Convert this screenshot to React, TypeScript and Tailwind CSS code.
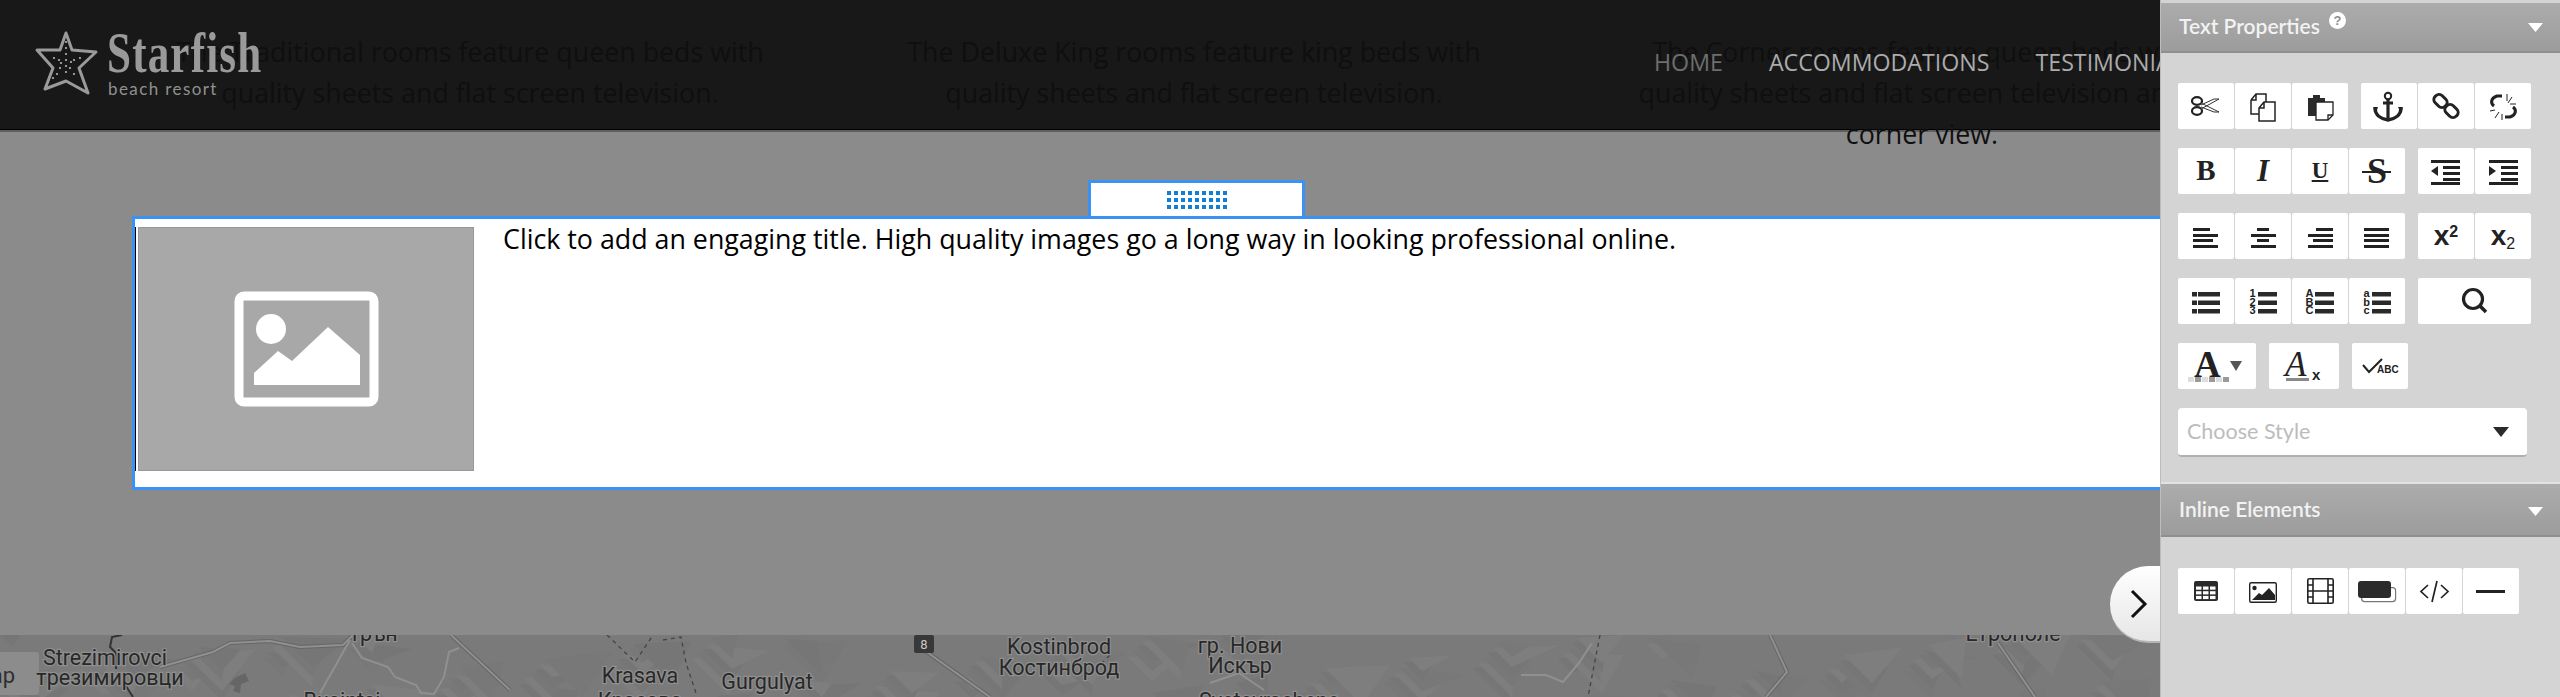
import React from "react";

const Btn = ({ w = "w-[56px]", children }: { w?: string; children?: React.ReactNode }) => (
  <div className={`relative flex h-[46px] ${w} shrink-0 items-center justify-center rounded-[2px] bg-white text-[#222]`}>{children}</div>
);

const Ic = ({ w = 56, children }: { w?: number; children: React.ReactNode }) => (
  <svg width={w} height={46} viewBox={`0 0 ${w} 46`} className="block" fill="none">
    {children}
  </svg>
);

const Bars = ({ rows, x = 0 }: { rows: [number, number, number][]; x?: number }) => (
  <>
    {rows.map(([rx, ry, rw], i) => (
      <rect key={i} x={rx + x} y={ry} width={rw} height={3} fill="#222" />
    ))}
  </>
);

const Group = ({ children }: { children: React.ReactNode }) => <div className="flex gap-px">{children}</div>;

const Row = ({ children }: { children: React.ReactNode }) => <div className="flex h-[46px] gap-[13px]">{children}</div>;

const ListIcon = ({ labels }: { labels: string[] }) => (
  <Btn>
    <Ic>
      {[0, 1, 2].map((i) => (
        <g key={i}>
          <rect x={23} y={14 + i * 8.5} width={19} height={4.5} fill="#2a2a2a" />
          <text x={17.5} y={19 + i * 8.5} textAnchor="middle" fontSize={11} fontWeight={700} fontFamily="'Liberation Sans',sans-serif" fill="#222">
            {labels[i]}
          </text>
        </g>
      ))}
    </Ic>
  </Btn>
);

const SectionHead = ({ title, help, tall }: { title: string; help?: boolean; tall?: boolean }) => (
  <div className={`relative flex ${tall ? "h-[53px]" : "h-[50px]"} items-center border-b-2 border-[#8f8f8f] bg-gradient-to-b from-[#acacac] to-[#9c9c9c] pl-[18px] pb-[2px]`}>
    <span className="font-['Lato',sans-serif] text-[21px] font-semibold text-[#f2f2f2]">{title}</span>
    {help && (
      <span className="absolute left-[168px] top-[9px] flex h-[17px] w-[17px] items-center justify-center rounded-full bg-white font-['Liberation_Sans',sans-serif] text-[13px] font-bold leading-none text-[#8f8f8f]">
        ?
      </span>
    )}
    <svg width={15} height={9} viewBox="0 0 15 9" className={`absolute right-[17px] ${tall ? "top-[23px]" : "top-[20px]"}`}>
      <path d="M0 0H15L7.5 9Z" fill="#fff" />
    </svg>
  </div>
);

const patches = Array.from({ length: 150 }, (_, i) => {
  const x = (i * 173) % 2160;
  const y = (i * 37) % 62;
  const a = 25 + ((i * 13) % 45);
  const b = 12 + ((i * 7) % 30);
  return {
    points: `${x},${y} ${x + a},${y + ((i * 5) % 20) - 8} ${x + b},${y + b}`,
    fill: i % 3 === 0 ? "#767676" : i % 3 === 1 ? "#7e7e7e" : "#787878",
  };
});

const labels: [string, number, number][] = [
  ["Strezimirovci", 105, 30],
  ["трезимировци", 110, 50],
  ["Трън", 373, 6],
  ["Busintsi", 342, 73],
  ["Krasava", 640, 48],
  ["Красава", 640, 73],
  ["Gurgulyat", 767, 54],
  ["Kostinbrod", 1059, 19],
  ["Костинброд", 1059, 40],
  ["гр. Нови", 1240, 18],
  ["Искър", 1240, 38],
  ["Svetovrachene", 1269, 73],
  ["Етрополе", 2013, 6],
];

const MapStrip = () => (
  <div className="h-[62px] shrink-0 overflow-hidden bg-[#7a7a7a]">
    <svg width={2160} height={62} viewBox="0 0 2160 62" className="block" fill="none">
      {patches.map((p, i) => (
        <polygon key={i} points={p.points} fill={p.fill} />
      ))}
      <path d="M235 43l10-5 4 8-8 3-1 9-7-2 2-5-6-2z" fill="#666" />
      <g stroke="#666" strokeWidth={4}>
        <path d="M160 32L213 17L230 8L270 6L300 12L343 10L353 0" />
        <path d="M451 0L510 55" />
        <path d="M924 15L990 62" />
        <path d="M1770 0L1787 37L1766 62" />
        <path d="M1998 8L2035 62" />
      </g>
      <g stroke="#909090" strokeWidth={2}>
        <path d="M160 32L213 17L230 8L270 6L300 12L343 10L353 0" />
        <path d="M350 5L320 58" />
        <path d="M352 8L362 23L388 32L395 42L416 50L421 58L434 59L444 42L449 17L459 13" />
        <path d="M451 0L510 55" />
        <path d="M924 15L990 62" />
        <path d="M1210 48L1239 38L1264 55" />
        <path d="M1521 40L1546 40L1563 47L1579 28L1592 8" />
        <path d="M1770 0L1787 37L1766 62" />
        <path d="M1998 8L2035 62" />
      </g>
      <g stroke="#444" strokeWidth={1.3} strokeDasharray="4 4">
        <path d="M607 0L635 27L653 0" />
        <path d="M663 5L681 2L686 28L696 58" />
        <path d="M1600 0L1588 62" />
        <path d="M1090 40L1110 20" />
      </g>
      <path d="M122 0L112 2L110 12L116 18V34M124 48L133 62" stroke="#333" strokeWidth={2} />
      <rect x={-6} y={17} width={45} height={43} rx={3} fill="#8c8c8c" />
      <text x={15} y={48} textAnchor="end" fontSize={22} fontFamily="Roboto,sans-serif" fill="#2f2f2f">ap</text>
      <rect x={914} y={0} width={20} height={18} rx={2} fill="#383838" />
      <text x={924} y={14} textAnchor="middle" fontSize={13} fontFamily="Roboto,sans-serif" fill="#c8c8c8">8</text>
      {labels.map(([t, x, y]) => (
        <text key={t} x={x} y={y} textAnchor="middle" fontSize={21.5} fontFamily="Roboto,sans-serif" fill="#282828" stroke="#8f8f8f" strokeWidth={2.5} className="[paint-order:stroke]">
          {t}
        </text>
      ))}
    </svg>
  </div>
);

const Logo = () => (
  <div className="absolute left-0 top-0 z-20 h-[130px] w-[300px]">
    <svg width={110} height={130} viewBox="0 0 110 130" className="absolute left-0 top-0" fill="none">
      <path d="M66 33L72 50L96 52L79 68L88 93L66 81L45 89L53 68L37 50L60 50Z" stroke="#9a9a9a" strokeWidth={3} strokeLinejoin="round" />
      {[[66,42],[66,48],[66,54],[66,60],[61,63],[71,62],[54,58],[59,60],[74,60],[80,58],[60,68],[57,74],[53,78],[70,68],[74,74],[66,66],[66,72]].map(([cx, cy], i) => (
        <circle key={i} cx={cx} cy={cy} r={1.1} fill="#b5b5b5" />
      ))}
    </svg>
    <div className="absolute left-[107px] top-[22px] origin-left scale-x-[0.77] whitespace-nowrap font-['Liberation_Serif',serif] text-[56px] font-bold leading-[62px] tracking-[1.5px] text-[#9a9a9a]">
      Starfish
    </div>
    <div className="absolute left-[108px] top-[79px] whitespace-nowrap font-['Lato',sans-serif] text-[17px] leading-[20px] tracking-[1.4px] text-[#909090]">
      beach resort
    </div>
  </div>
);

const BodyText = () => (
  <div className="absolute left-[107px] top-[31px] z-10 flex whitespace-nowrap text-center font-['Open_Sans',sans-serif] text-[26.8px] leading-[41px] text-[#0f0f0f]">
    <p className="w-[726px]">The Traditional rooms feature queen beds with<br />quality sheets and flat screen television.</p>
    <p className="w-[722px]">The Deluxe King rooms feature king beds with<br />quality sheets and flat screen television.</p>
    <p className="w-[734px]">The Corner rooms feature queen beds with<br />quality sheets and flat screen television and a<br />corner view.</p>
  </div>
);

const Nav = () => (
  <nav className="absolute left-[1654px] top-[44px] z-20 flex gap-[46px] whitespace-nowrap font-['Open_Sans',sans-serif] text-[23.2px] leading-[36px] text-[#ababab]">
    <span className="text-[#6e6e6e]">HOME</span>
    <span>ACCOMMODATIONS</span>
    <span>TESTIMONIALS</span>
  </nav>
);

const Panel = () => (
  <aside className="relative z-30 flex h-[697px] w-[400px] shrink-0 flex-col border-l border-[#bdbdbd] bg-[#d4d4d4] pt-[3px]">
    <SectionHead title="Text Properties" help />
    <div className="flex flex-col gap-[19px] pl-[17px] pt-[30px]">
      <Row>
        <Group>
          <Btn>
            <Ic>
              <ellipse cx={19} cy={18} rx={5} ry={3.8} stroke="#222" strokeWidth={2.2} />
              <ellipse cx={19} cy={28} rx={5} ry={3.8} stroke="#222" strokeWidth={2.2} />
              <path d="M23 20L41 29L36 29L23 24M23 26L41 16L36 16L23 22" stroke="#333" strokeWidth={1} fill="#fff" />
            </Ic>
          </Btn>
          <Btn>
            <Ic>
              <path d="M16 17L21 11H31V19M16 17V31H24M16 17H21V11" stroke="#222" strokeWidth={1.5} fill="#fff" />
              <path d="M24 25L29 19H40V38H24ZM24 25H29V19" stroke="#222" strokeWidth={1.5} fill="#fff" />
            </Ic>
          </Btn>
          <Btn>
            <Ic>
              <path d="M16 15H21V12H28V15H33V33H16Z" fill="#2b2b2b" />
              <path d="M24 19H41V32L36 37H24Z" fill="#fff" stroke="#222" strokeWidth={1.3} />
              <path d="M41 32H36V37" stroke="#222" strokeWidth={1.3} />
            </Ic>
          </Btn>
        </Group>
        <Group>
          <Btn>
            <Ic>
              <circle cx={27} cy={13} r={3.2} stroke="#222" strokeWidth={2} />
              <path d="M27 16V35M22 20H32" stroke="#222" strokeWidth={3.2} />
              <path d="M14 25C14 32 20 36 27 37C34 36 40 32 40 25" stroke="#222" strokeWidth={3.4} />
              <path d="M12 24H17L15 30ZM37 24H42L40 30Z" fill="#222" />
            </Ic>
          </Btn>
          <Btn>
            <Ic>
              <rect x={15.5} y={13} width={14} height={10} rx={4.5} transform="rotate(45 22.5 18)" stroke="#222" strokeWidth={3} />
              <rect x={26.5} y={23} width={14} height={10} rx={4.5} transform="rotate(45 33.5 28)" stroke="#222" strokeWidth={3} />
            </Ic>
          </Btn>
          <Btn>
            <Ic>
              <path d="M27 13H22C16 15 15 20 19 23M30 34H35C41 32 42 27 38 24" stroke="#222" strokeWidth={3} />
              <path d="M20 27L15 28M24 29L20 35M27 31V37M32 11V18M37 14L33 20M41 21H35" stroke="#222" strokeWidth={1} />
            </Ic>
          </Btn>
        </Group>
      </Row>
      <Row>
        <Group>
          <Btn><span className="font-['Liberation_Serif',serif] text-[29px] font-bold">B</span></Btn>
          <Btn><span className="font-['Liberation_Serif',serif] text-[31px] font-bold italic">I</span></Btn>
          <Btn><span className="font-['Liberation_Serif',serif] text-[23px] font-bold underline underline-offset-2">U</span></Btn>
          <Btn>
            <span className="font-['Liberation_Serif',serif] text-[36px] font-bold leading-none">S</span>
            <span className="absolute left-[13px] top-[23px] h-[2px] w-[29px] bg-[#222]" />
          </Btn>
        </Group>
        <Group>
          <Btn>
            <Ic>
              <Bars rows={[[13, 12, 29], [25, 18, 17], [25, 24, 17], [25, 30, 17]]} />
              <rect x={13} y={34} width={29} height={3} fill="#222" />
              <path d="M20 18V28L13 23Z" fill="#222" />
            </Ic>
          </Btn>
          <Btn>
            <Ic>
              <Bars rows={[[14, 12, 29], [26, 18, 17], [26, 24, 17], [26, 30, 17]]} />
              <rect x={14} y={34} width={29} height={3} fill="#222" />
              <path d="M14 18V28L21 23Z" fill="#222" />
            </Ic>
          </Btn>
        </Group>
      </Row>
      <Row>
        <Group>
          <Btn><Ic><Bars rows={[[15, 15, 17], [15, 21, 25], [15, 26, 20], [15, 32, 25]]} /></Ic></Btn>
          <Btn><Ic><Bars rows={[[22, 15, 12], [16, 21, 25], [22, 26, 12], [16, 32, 25]]} /></Ic></Btn>
          <Btn><Ic><Bars rows={[[24, 15, 17], [16, 21, 25], [21, 26, 20], [16, 32, 25]]} /></Ic></Btn>
          <Btn><Ic><Bars rows={[[15, 15, 25], [15, 21, 25], [15, 26, 25], [15, 32, 25]]} /></Ic></Btn>
        </Group>
        <Group>
          <Btn>
            <span className="font-['Liberation_Sans',sans-serif] text-[28px] font-bold leading-none">x<sup className="text-[16px] leading-none">2</sup></span>
          </Btn>
          <Btn>
            <span className="font-['Liberation_Sans',sans-serif] text-[28px] font-bold leading-none">x<sub className="text-[16px] font-normal leading-none">2</sub></span>
          </Btn>
        </Group>
      </Row>
      <Row>
        <Group>
          <Btn>
            <Ic>
              {[0, 1, 2].map((i) => (
                <g key={i}>
                  <rect x={14} y={14 + i * 8.5} width={5} height={4.5} fill="#2a2a2a" />
                  <rect x={20} y={14 + i * 8.5} width={22} height={4.5} fill="#2a2a2a" />
                </g>
              ))}
            </Ic>
          </Btn>
          <ListIcon labels={["1", "2", "3"]} />
          <ListIcon labels={["A", "B", "C"]} />
          <ListIcon labels={["a", "b", "c"]} />
        </Group>
        <Btn w="w-[113px]">
          <Ic w={113}>
            <circle cx={55} cy={21} r={9.5} stroke="#222" strokeWidth={3.2} />
            <path d="M62 28L68 34" stroke="#222" strokeWidth={3.6} />
          </Ic>
        </Btn>
      </Row>
      <div className="flex h-[46px]">
        <Btn w="w-[78px]">
          <span className="absolute left-[16px] top-[2px] font-['Liberation_Serif',serif] text-[37px] font-bold leading-[40px]">A</span>
          <svg width={41} height={5} className="absolute left-[10px] top-[34px]">
            {[0, 1, 2, 3, 4, 5].map((i) => (
              <rect key={i} x={i * 7} width={6} height={5} fill={i % 2 ? "#9a9a9a" : "#dddddd"} />
            ))}
          </svg>
          <svg width={12} height={10} className="absolute left-[52px] top-[18px]"><path d="M0 0H12L6 10Z" fill="#555" /></svg>
        </Btn>
        <div className="w-[13px]" />
        <Btn w="w-[70px]">
          <span className="absolute left-[16px] top-[2px] font-['Liberation_Serif',serif] text-[35px] italic leading-[40px]">A</span>
          <span className="absolute left-[17px] top-[35px] h-[3px] w-[23px] bg-[#8a8a8a]" />
          <span className="absolute left-[43px] top-[24px] font-['Liberation_Sans',sans-serif] text-[15px] font-bold leading-[15px]">x</span>
        </Btn>
        <div className="w-[13px]" />
        <Btn>
          <Ic>
            <path d="M11 22L17 29L30 16" stroke="#222" strokeWidth={2} />
            <text x={25} y={30} fontSize={10} fontWeight={700} fontFamily="'Liberation Sans',sans-serif" fill="#222">ABC</text>
          </Ic>
        </Btn>
      </div>
      <div className="flex h-[49px] w-[349px] items-center justify-between rounded-[4px] border-b-2 border-[#b0b0b0] bg-white pl-[9px] pr-[18px]">
        <span className="font-['Lato',sans-serif] text-[21.5px] text-[#bcbcbc]">Choose Style</span>
        <svg width={16} height={10}><path d="M0 0H16L8 10Z" fill="#2b2b2b" /></svg>
      </div>
    </div>
    <div className="mt-[25px] h-[2px] bg-[#e2e2e2]" />
    <SectionHead title="Inline Elements" tall />
    <div className="pl-[17px] pt-[31px]">
      <Group>
        <Btn>
          <Ic>
            <rect x={16} y={13} width={24} height={20} rx={2} fill="#2b2b2b" />
            {[0, 1, 2].map((r) =>
              [0, 1, 2].map((c) => <rect key={`${r}${c}`} x={18 + c * 7} y={18.5 + r * 4.7} width={5.5} height={3.2} fill="#fff" />)
            )}
          </Ic>
        </Btn>
        <Btn>
          <Ic>
            <rect x={14.7} y={14.7} width={26.6} height={19.6} rx={1.5} stroke="#222" strokeWidth={1.4} />
            <circle cx={19.5} cy={20} r={2.2} fill="#222" />
            <path d="M17 32L24 25L27 27L34 20L40 27V32Z" fill="#222" />
          </Ic>
        </Btn>
        <Btn>
          <Ic>
            <rect x={15.8} y={10.8} width={25.4} height={24.4} rx={1.5} stroke="#222" strokeWidth={1.6} />
            <path d="M21 11V35M36 11V35M21 23H36M16 17H21M16 23H21M16 29H21M36 17H41M36 23H41M36 29H41" stroke="#222" strokeWidth={1.6} />
          </Ic>
        </Btn>
        <Btn>
          <Ic>
            <rect x={12.6} y={19.6} width={34} height={14} rx={3} stroke="#777" strokeWidth={1.2} fill="#fff" />
            <rect x={9} y={13} width={33} height={17} rx={3} fill="#2b2b2b" />
          </Ic>
        </Btn>
        <Btn>
          <Ic>
            <path d="M22 17L15 23.5L22 30M35 17L42 23.5L35 30M31 13L26 34" stroke="#222" strokeWidth={1.7} />
          </Ic>
        </Btn>
        <Btn>
          <Ic><rect x={13} y={22} width={29} height={3} fill="#222" /></Ic>
        </Btn>
      </Group>
    </div>
  </aside>
);

const Dots = () => (
  <div className="grid grid-cols-9 gap-x-[3px] gap-y-[3px]">
    {Array.from({ length: 27 }, (_, i) => (
      <span key={i} className="h-[4px] w-[4px] bg-[#0f80d6]" />
    ))}
  </div>
);

const Editor = () => (
  <div className="relative flex min-w-0 flex-1 flex-col bg-[#8b8b8b]">
    <header className="h-[130px] shrink-0 border-b border-black bg-[#181818]" />
    <div className="h-[2px] shrink-0 bg-[#5f5f5f]" />
    <BodyText />
    <Logo />
    <Nav />
    <main className="relative z-20 flex min-h-0 flex-1 flex-col pt-[48px]">
      <div className="ml-[1088px] flex h-[36px] w-[217px] items-center justify-center border-x-[3px] border-t-[3px] border-[#3b92f5] bg-white">
        <Dots />
      </div>
      <section className="ml-[132px] flex h-[274px] border-y-[3px] border-l-[3px] border-[#3b92f5] bg-white pt-[8px]">
        <div className="flex h-[244px] border-l border-black pl-[2px]">
          <div className="flex h-[244px] w-[336px] items-center justify-center border border-[#999] bg-[#a8a8a8]">
            <svg width={145} height={116} viewBox="0 0 145 116" fill="none" className="block">
              <rect x={5} y={5} width={135} height={106} rx={5} stroke="#fff" strokeWidth={9} />
              <circle cx={37} cy={38} r={15} fill="#fff" />
              <path d="M20 82L44 60L58 70L94 36L126 64V94H20Z" fill="#fff" />
            </svg>
          </div>
        </div>
        <p className="ml-[29px] whitespace-nowrap font-['Open_Sans',sans-serif] text-[26.8px] leading-[24px] text-black">
          Click to add an engaging title. High quality images go a long way in looking professional online.
        </p>
      </section>
    </main>
    <MapStrip />
    <div className="absolute right-0 top-[566px] z-30 flex h-[77px] w-[50px] items-center justify-center rounded-l-[38px] border-b-2 border-[#b5b5b5] bg-gradient-to-b from-white to-[#e6e6e6]">
      <svg width={20} height={30} viewBox="0 0 20 30" fill="none" className="ml-[8px]">
        <path d="M3 2L16 15L3 28" stroke="#111" strokeWidth={3} />
      </svg>
    </div>
  </div>
);

export default function App() {
  return (
    <div className="flex h-[697px] w-[2560px] overflow-hidden">
      <Editor />
      <Panel />
    </div>
  );
}
